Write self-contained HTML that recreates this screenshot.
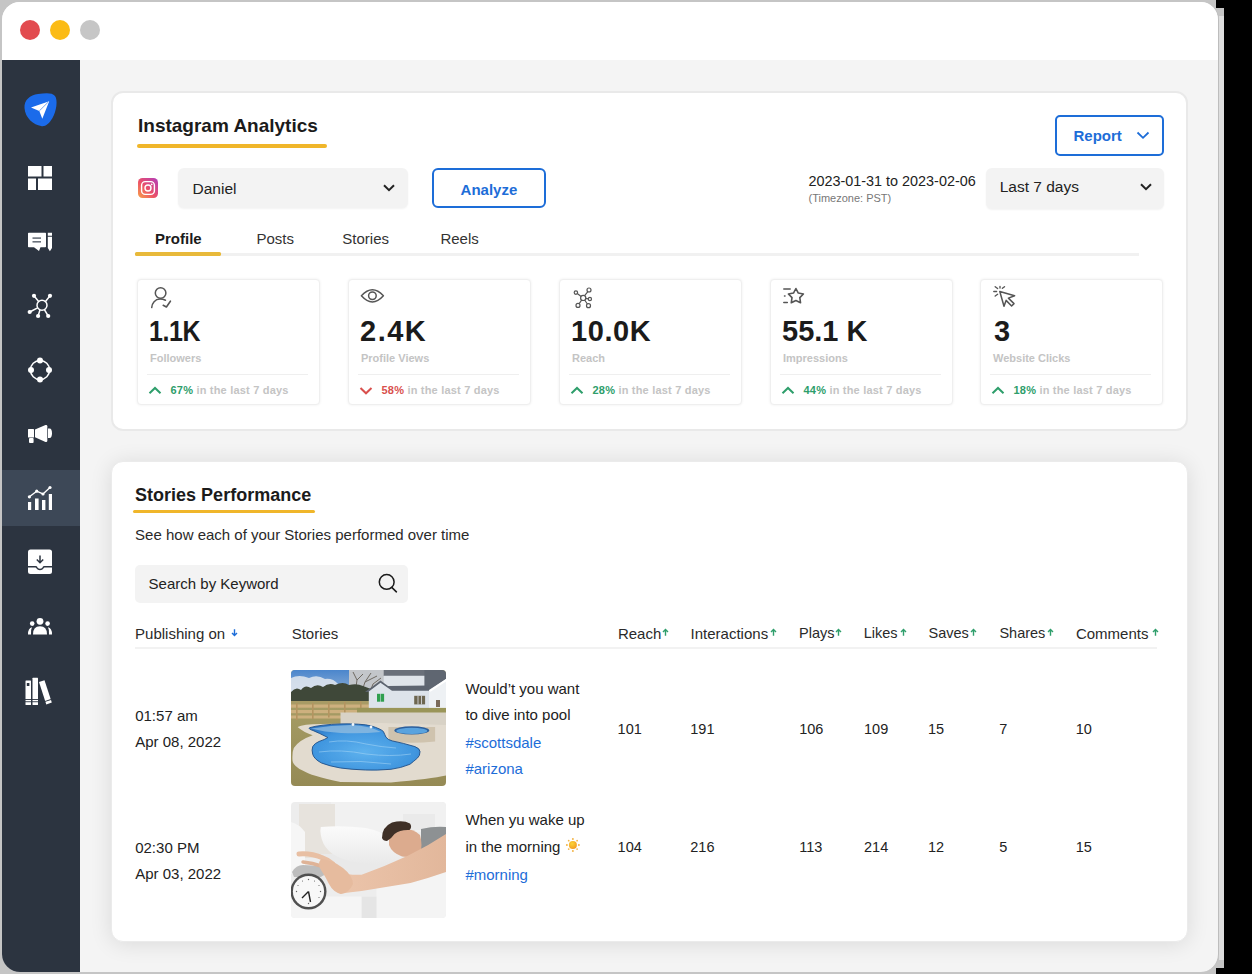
<!DOCTYPE html>
<html><head><meta charset="utf-8">
<style>
*{margin:0;padding:0;box-sizing:border-box}
html,body{width:1252px;height:974px;overflow:hidden;background:#000;font-family:"Liberation Sans",sans-serif}
.a{position:absolute}
.t{position:absolute;white-space:nowrap;line-height:1}
#bg1{left:0;top:0;width:1216px;height:974px;background:#c5c5c5}
#bg2{left:0;top:8px;width:1224px;height:960px;background:#c5c5c5}
#rstrip{left:1219px;top:16px;width:5px;height:944px;background:#dedede}
#win{left:2px;top:2px;width:1217px;height:970px;border-radius:18px;overflow:hidden;background:#f4f4f4;border-right:1px solid #bdbdbd}
#topbar{left:0;top:0;width:1216px;height:58px;background:#fff}
.dot{position:absolute;width:20px;height:20px;border-radius:50%;top:18px}
#side{left:0;top:58px;width:78px;height:920px;background:#2c3440}
#active{left:0;top:468px;width:78px;height:56px;background:#3d4857}
.card{position:absolute;background:#fff;border:2px solid #e9e9e9;border-radius:12px}
.stat{position:absolute;background:#fff;border:1px solid #efefef;border-radius:4px;box-shadow:0 0 3px rgba(0,0,0,0.07);width:183px;height:126px;top:279px}
</style></head>
<body>
<div id="bg1" class="a"></div>
<div id="bg2" class="a"></div>
<div id="rstrip" class="a"></div>
<div id="win" class="a">
  <div id="topbar" class="a"></div>
  <div class="dot" style="left:18px;background:#e24b4f"></div>
  <div class="dot" style="left:48px;background:#fbbb15"></div>
  <div class="dot" style="left:78px;background:#c6c6c6"></div>
  <div id="side" class="a"></div>
  <div id="active" class="a"></div>
</div>

<svg class="a" style="left:0;top:0" width="80" height="974" viewBox="0 0 80 974">
  <path d="M24.5 108 C24 100 30 95 38 94 C46 93 52 92.5 55 96 C58 100 56.5 111 52.5 118 C49 124 45 127 41 126 C34 125 25 118 24.5 108 Z" fill="#1b6bea"/>
  <path d="M31 107.6 L49.2 101.2 L42.3 118.8 L39.3 110.9 Z" fill="#fff"/>
  <path d="M39.3 110.9 L48 102.3" stroke="#1b6bea" stroke-width="0.6"/>
  <g fill="#fff">
    <rect x="28" y="166" width="13.5" height="10.5"/>
    <rect x="43.5" y="166" width="8.5" height="10.5"/>
    <rect x="28" y="178.5" width="8" height="11.5"/>
    <rect x="38" y="178.5" width="14" height="11.5"/>
  </g>
  <path d="M28 233.5 Q28 232.8 28.7 232.8 H45.3 Q46 232.8 46 233.5 V246.5 Q46 247.3 45.3 247.3 H40.5 L39 251 L34 247.3 H28.7 Q28 247.3 28 246.5 Z" fill="#fff"/>
  <rect x="32.5" y="237.3" width="8.5" height="1.6" fill="#6b727c"/>
  <rect x="32.5" y="241" width="8.5" height="1.6" fill="#6b727c"/>
  <path d="M47.8 232.8 H52 V235.8 H47.8 Z M47.8 236.8 H52 V248 L49.9 251.2 L47.8 248 Z" fill="#fff"/>
  <g stroke="#fff" stroke-width="1.5" fill="none">
    <circle cx="42" cy="305.3" r="5"/>
    <path d="M38.6 301.5 L34 295.8 M45.5 301.5 L50 295.8 M37.6 307.8 L29.7 312 M40 309.8 L38.1 316 M44.4 309.6 L48.2 316"/>
    <circle cx="40" cy="370" r="9.6"/>
  </g>
  <g fill="#fff">
    <circle cx="34" cy="295.8" r="2.1"/><circle cx="50" cy="295.8" r="2.1"/><circle cx="29.7" cy="312" r="2.1"/><circle cx="38.1" cy="316" r="2.1"/><circle cx="48.2" cy="316" r="2.1"/>
    <circle cx="40" cy="360.6" r="3"/><circle cx="31" cy="370" r="3"/><circle cx="49" cy="370" r="3"/><circle cx="40" cy="379.4" r="3"/>
    <rect x="28" y="429" width="6" height="8.6" rx="0.6"/>
    <rect x="29" y="438" width="4.6" height="5" rx="1"/>
    <path d="M35 429.5 L45.5 425 Q47.3 424.5 47.3 426.3 V440.7 Q47.3 442.5 45.5 442 L35 437.3 Z"/>
    <path d="M48 428.6 H49.5 Q52 428.6 52 433.3 Q52 438 49.5 438 H48 Z"/>
    <rect x="28" y="502" width="3.2" height="8"/>
    <rect x="35" y="498.5" width="3.6" height="11.5"/>
    <rect x="42" y="500" width="3.4" height="10"/>
    <rect x="48.8" y="494" width="3.2" height="16"/>
    <circle cx="29.4" cy="496.8" r="1.6"/><circle cx="36.7" cy="491.2" r="1.6"/><circle cx="43" cy="494" r="1.6"/><circle cx="50" cy="487.5" r="1.6"/>
  </g>
  <path d="M29.4 496.8 L36.7 491.2 L43 494 L50 487.5" stroke="#fff" stroke-width="1.4" fill="none"/>
  <rect x="28" y="549.5" width="24" height="24.5" rx="2.5" fill="#fff"/>
  <path d="M40 555.5 V562.5 M36.8 559.5 L40 562.7 L43.2 559.5" stroke="#2c3440" stroke-width="1.5" fill="none"/>
  <path d="M28 566.8 H35.5 Q36.5 566.8 37 567.8 Q38 569.5 40 569.5 Q42 569.5 43 567.8 Q43.5 566.8 44.5 566.8 H52" stroke="#2c3440" stroke-width="1.5" fill="none"/>
  <g fill="#fff">
    <circle cx="40" cy="621.3" r="3.4"/>
    <circle cx="32.2" cy="623.6" r="2.3"/>
    <circle cx="47.6" cy="623.6" r="2.3"/>
    <path d="M33 634.4 Q33 626.3 40 626.3 Q47 626.3 47 634.4 Z"/>
    <path d="M28 634.4 Q28 628 32 627.3 Q30.5 630 31 634.4 Z"/>
    <path d="M52 634.4 Q52 628 48 627.3 Q49.5 630 49 634.4 Z"/>
    <rect x="25.5" y="680.5" width="5.5" height="24.5" rx="0.5"/>
    <rect x="32.5" y="677.8" width="5.5" height="27.2" rx="0.5"/>
    <path d="M39 682 L44.5 680.3 L51.8 702.5 L46.3 704.5 Z"/>
  </g>
  <g fill="#2c3440">
    <rect x="26.8" y="683" width="2.6" height="3"/>
    <rect x="25" y="699" width="14" height="0.9"/>
    <rect x="25" y="701.3" width="14" height="0.9"/>
    <path d="M44.3 701.2 L50.8 699 L51.1 699.9 L44.6 702.1 Z"/>
  </g>
</svg>
<!-- CARD1 -->
<div class="card" style="left:111px;top:91px;width:1077px;height:340px"></div>
<div class="t" style="left:138px;top:116.2px;font-size:19px;font-weight:700;color:#1b1b1b;">Instagram Analytics</div>
<div class="a" style="left:137px;top:144px;width:189.5px;height:3.6px;border-radius:2px;background:#f0b62a"></div>
<svg class="a" style="left:138px;top:178px" width="20" height="20" viewBox="0 0 20 20">
<defs><linearGradient id="ig" x1="0" y1="1" x2="1" y2="0"><stop offset="0" stop-color="#f8a14a"/><stop offset="0.45" stop-color="#ec5068"/><stop offset="1" stop-color="#b13dbb"/></linearGradient></defs>
<rect width="20" height="20" rx="4.5" fill="url(#ig)"/>
<rect x="3.6" y="3.6" width="12.8" height="12.8" rx="3.6" fill="none" stroke="#fff" stroke-width="1.4"/>
<circle cx="10" cy="10" r="3" fill="none" stroke="#fff" stroke-width="1.4"/>
<circle cx="13.7" cy="6.3" r="0.9" fill="#fff"/>
</svg>
<div class="a" style="left:178px;top:168px;width:230px;height:40px;border-radius:6px;background:#f3f3f3;box-shadow:0 1px 2px rgba(0,0,0,0.05)"></div>
<div class="t" style="left:192.5px;top:181.1px;font-size:15.5px;font-weight:400;color:#222;">Daniel</div>
<svg class="a" style="left:382px;top:183px" width="14" height="10" viewBox="0 0 14 10"><path d="M2 2.2 L7 7.2 L12 2.2" stroke="#222" stroke-width="2" fill="none"/></svg>
<div class="a" style="left:432px;top:168px;width:114px;height:40px;border-radius:6px;border:2px solid #1d6dd8"></div>
<div class="t" style="left:460.6px;top:181.9px;font-size:15px;font-weight:700;color:#1d6dd8;">Analyze</div>
<div class="a" style="left:1055px;top:115px;width:109px;height:41px;border-radius:5px;border:2px solid #1d6dd8"></div>
<div class="t" style="left:1073.5px;top:128.2px;font-size:15px;font-weight:700;color:#1d6dd8;">Report</div>
<svg class="a" style="left:1135px;top:130px" width="16" height="10" viewBox="0 0 16 10"><path d="M2.5 2.5 L8 7.8 L13.5 2.5" stroke="#1d6dd8" stroke-width="1.8" fill="none"/></svg>
<div class="t" style="left:808.5px;top:174.3px;font-size:14.4px;font-weight:400;color:#222;">2023-01-31 to 2023-02-06</div>
<div class="t" style="left:808.5px;top:193.0px;font-size:11px;font-weight:400;color:#777;">(Timezone: PST)</div>
<div class="a" style="left:986px;top:168px;width:178px;height:41px;border-radius:6px;background:#f3f3f3;box-shadow:0 1px 2px rgba(0,0,0,0.05)"></div>
<div class="t" style="left:999.7px;top:179.0px;font-size:15.5px;font-weight:400;color:#222;">Last 7 days</div>
<svg class="a" style="left:1139px;top:182px" width="14" height="10" viewBox="0 0 14 10"><path d="M2 2.2 L7 7.2 L12 2.2" stroke="#222" stroke-width="2" fill="none"/></svg>
<div class="t" style="left:155px;top:230.8px;font-size:15px;font-weight:700;color:#1b1b1b;">Profile</div>
<div class="t" style="left:256.4px;top:230.8px;font-size:15px;font-weight:400;color:#333;">Posts</div>
<div class="t" style="left:342.3px;top:230.8px;font-size:15px;font-weight:400;color:#333;">Stories</div>
<div class="t" style="left:440.4px;top:231.4px;font-size:15px;font-weight:400;color:#333;">Reels</div>
<div class="a" style="left:221px;top:252.5px;width:918px;height:3px;background:#f1f1f1"></div>
<div class="a" style="left:135px;top:252.2px;width:86px;height:3.4px;border-radius:1.5px;background:#e8b93a"></div>
<div class="stat" style="left:137px"></div>
<svg class="a" style="left:137px;top:279px" width="40" height="32" viewBox="0 0 40 32"><circle cx="23.6" cy="14" r="5.3" fill="none" stroke="#555" stroke-width="1.5"/><path d="M14.7 28.6 C15 24 18 20.2 23 20.1 C25 20.1 27 20.6 28.5 21.3" fill="none" stroke="#555" stroke-width="1.5" stroke-linecap="round"/><path d="M26.2 26.3 L29.4 28 L33.4 22.2" fill="none" stroke="#555" stroke-width="1.6" stroke-linecap="round" stroke-linejoin="round"/></svg>
<div class="t" style="left:149px;top:317.2px;font-size:29px;font-weight:700;color:#1b1b1b;letter-spacing:-0.5px;transform:scaleX(0.86);transform-origin:0 0;">1.1K</div>
<div class="t" style="left:150px;top:353.2px;font-size:11px;font-weight:700;color:#c4c4c4;">Followers</div>
<div class="a" style="left:147px;top:373.5px;width:161px;height:1px;background:#efefef"></div>
<svg class="a" style="left:148px;top:385.5px" width="15" height="10" viewBox="0 0 15 10"><path d="M1.5 7.3 L7 2 L12.5 7.3" stroke="#2e9e6b" stroke-width="2" fill="none"/></svg>
<div class="t" style="left:170.5px;top:384.6px;font-size:11px;font-weight:700;color:#c4c4c4;letter-spacing:0.2px"><span style="color:#2e9e6b">67%</span> in the last 7 days</div>
<div class="stat" style="left:348px"></div>
<svg class="a" style="left:348px;top:279px" width="40" height="32" viewBox="0 0 40 32"><path d="M13.4 16.8 Q24.4 4.6 35.4 16.8 Q24.4 29 13.4 16.8 Z" fill="none" stroke="#555" stroke-width="1.5" stroke-linejoin="round"/><circle cx="24.4" cy="16.8" r="3.8" fill="none" stroke="#555" stroke-width="1.5"/></svg>
<div class="t" style="left:360px;top:317.2px;font-size:29px;font-weight:700;color:#1b1b1b;letter-spacing:1.5px;">2.4K</div>
<div class="t" style="left:361px;top:353.2px;font-size:11px;font-weight:700;color:#c4c4c4;">Profile Views</div>
<div class="a" style="left:358px;top:373.5px;width:161px;height:1px;background:#efefef"></div>
<svg class="a" style="left:359px;top:385.5px" width="15" height="10" viewBox="0 0 15 10"><path d="M1.5 2 L7 7.3 L12.5 2" stroke="#d9504d" stroke-width="2" fill="none"/></svg>
<div class="t" style="left:381.5px;top:384.6px;font-size:11px;font-weight:700;color:#c4c4c4;letter-spacing:0.2px"><span style="color:#d9504d">58%</span> in the last 7 days</div>
<div class="stat" style="left:559px"></div>
<svg class="a" style="left:559px;top:279px" width="40" height="32" viewBox="0 0 40 32"><g fill="none" stroke="#555" stroke-width="1.2"><circle cx="24.2" cy="18.9" r="2.6"/><circle cx="16.9" cy="13.6" r="1.7"/><circle cx="30" cy="11" r="2"/><circle cx="30.9" cy="20" r="1.6"/><circle cx="19" cy="26.4" r="2"/><circle cx="29.5" cy="26.7" r="2"/><path d="M22.1 17.4 L18.3 14.6 M25.6 16.6 L28.9 12.7 M26.8 19.4 L29.3 19.8 M22.7 21 L20.2 24.7 M25.6 21 L28.4 25"/></g></svg>
<div class="t" style="left:571px;top:317.2px;font-size:29px;font-weight:700;color:#1b1b1b;letter-spacing:0.6px;">10.0K</div>
<div class="t" style="left:572px;top:353.2px;font-size:11px;font-weight:700;color:#c4c4c4;">Reach</div>
<div class="a" style="left:569px;top:373.5px;width:161px;height:1px;background:#efefef"></div>
<svg class="a" style="left:570px;top:385.5px" width="15" height="10" viewBox="0 0 15 10"><path d="M1.5 7.3 L7 2 L12.5 7.3" stroke="#2e9e6b" stroke-width="2" fill="none"/></svg>
<div class="t" style="left:592.5px;top:384.6px;font-size:11px;font-weight:700;color:#c4c4c4;letter-spacing:0.2px"><span style="color:#2e9e6b">28%</span> in the last 7 days</div>
<div class="stat" style="left:770px"></div>
<svg class="a" style="left:770px;top:279px" width="40" height="32" viewBox="0 0 40 32"><path d="M25.90 9.50 L28.31 14.08 L33.41 14.96 L29.80 18.67 L30.54 23.79 L25.90 21.50 L21.26 23.79 L22.00 18.67 L18.39 14.96 L23.49 14.08 Z" fill="none" stroke="#555" stroke-width="1.6" stroke-linejoin="round"/><path d="M13.8 10 H20.2 M14.5 17 H15 M13.8 23.6 H17.3" stroke="#555" stroke-width="1.5" stroke-linecap="round"/></svg>
<div class="t" style="left:782px;top:317.2px;font-size:29px;font-weight:700;color:#1b1b1b;">55.1 K</div>
<div class="t" style="left:783px;top:353.2px;font-size:11px;font-weight:700;color:#c4c4c4;">Impressions</div>
<div class="a" style="left:780px;top:373.5px;width:161px;height:1px;background:#efefef"></div>
<svg class="a" style="left:781px;top:385.5px" width="15" height="10" viewBox="0 0 15 10"><path d="M1.5 7.3 L7 2 L12.5 7.3" stroke="#2e9e6b" stroke-width="2" fill="none"/></svg>
<div class="t" style="left:803.5px;top:384.6px;font-size:11px;font-weight:700;color:#c4c4c4;letter-spacing:0.2px"><span style="color:#2e9e6b">44%</span> in the last 7 days</div>
<div class="stat" style="left:980px"></div>
<svg class="a" style="left:980px;top:279px" width="40" height="32" viewBox="0 0 40 32"><path d="M19.8 12.5 L34.6 16.8 L28.4 19.1 L34 24.6 L31.6 27 L26.1 21.4 L24 27.3 Z" fill="none" stroke="#555" stroke-width="1.5" stroke-linejoin="round"/><path d="M20 7.4 V9.1 M22.4 9.3 L24.5 7.7 M15.2 7.7 L17.6 9.5 M13.8 12.5 H16.6 M15.2 17 L17.6 15.3" stroke="#555" stroke-width="1.4" stroke-linecap="round"/></svg>
<div class="t" style="left:992px;top:317.2px;font-size:29px;font-weight:700;color:#1b1b1b;margin-left:2px;">3</div>
<div class="t" style="left:993px;top:353.2px;font-size:11px;font-weight:700;color:#c4c4c4;">Website Clicks</div>
<div class="a" style="left:990px;top:373.5px;width:161px;height:1px;background:#efefef"></div>
<svg class="a" style="left:991px;top:385.5px" width="15" height="10" viewBox="0 0 15 10"><path d="M1.5 7.3 L7 2 L12.5 7.3" stroke="#2e9e6b" stroke-width="2" fill="none"/></svg>
<div class="t" style="left:1013.5px;top:384.6px;font-size:11px;font-weight:700;color:#c4c4c4;letter-spacing:0.2px"><span style="color:#2e9e6b">18%</span> in the last 7 days</div>
<!-- CARD2 -->
<div class="card" style="left:111px;top:461px;width:1077px;height:481px;border:1px solid #ebebeb;border-radius:12px;box-shadow:0 2px 22px rgba(0,0,0,0.11)"></div>
<div class="t" style="left:135.1px;top:485.8px;font-size:18px;font-weight:700;color:#1b1b1b;">Stories Performance</div>
<div class="a" style="left:133px;top:509.5px;width:182px;height:3.5px;border-radius:2px;background:#f0b62a"></div>
<div class="t" style="left:135.1px;top:526.8px;font-size:15px;font-weight:400;color:#2a2a2a;">See how each of your Stories performed over time</div>
<div class="a" style="left:135px;top:565px;width:273px;height:38px;border-radius:5px;background:#f3f3f3"></div>
<div class="t" style="left:148.6px;top:576.1px;font-size:15px;font-weight:400;color:#222;">Search by Keyword</div>
<svg class="a" style="left:372px;top:568px" width="30" height="30" viewBox="0 0 30 30"><circle cx="14.7" cy="13.9" r="7.4" fill="none" stroke="#1b1b1b" stroke-width="1.5"/><path d="M20 19.6 L24.4 23.8" stroke="#1b1b1b" stroke-width="1.6" stroke-linecap="round"/></svg>
<div class="t" style="left:135.1px;top:625.8px;font-size:15px;font-weight:400;color:#2a2a2a;">Publishing on</div>
<div class="t" style="left:291.7px;top:625.8px;font-size:15px;font-weight:400;color:#2a2a2a;">Stories</div>
<div class="t" style="left:617.9px;top:625.8px;font-size:15px;font-weight:400;color:#2a2a2a;">Reach</div>
<svg class="a" style="left:661.8px;top:628px" width="7" height="9" viewBox="0 0 7 9"><path d="M3.5 7.8 V1.6 M1 3.9 L3.5 1.4 L6 3.9" stroke="#2e9e6b" stroke-width="1.4" fill="none"/></svg>
<div class="t" style="left:690.6px;top:625.8px;font-size:15px;font-weight:400;color:#2a2a2a;">Interactions</div>
<svg class="a" style="left:770.4px;top:628px" width="7" height="9" viewBox="0 0 7 9"><path d="M3.5 7.8 V1.6 M1 3.9 L3.5 1.4 L6 3.9" stroke="#2e9e6b" stroke-width="1.4" fill="none"/></svg>
<div class="t" style="left:799px;top:625.8px;font-size:14.5px;font-weight:400;color:#2a2a2a;">Plays</div>
<svg class="a" style="left:835.3px;top:628px" width="7" height="9" viewBox="0 0 7 9"><path d="M3.5 7.8 V1.6 M1 3.9 L3.5 1.4 L6 3.9" stroke="#2e9e6b" stroke-width="1.4" fill="none"/></svg>
<div class="t" style="left:863.7px;top:625.8px;font-size:14.5px;font-weight:400;color:#2a2a2a;">Likes</div>
<svg class="a" style="left:900.2px;top:628px" width="7" height="9" viewBox="0 0 7 9"><path d="M3.5 7.8 V1.6 M1 3.9 L3.5 1.4 L6 3.9" stroke="#2e9e6b" stroke-width="1.4" fill="none"/></svg>
<div class="t" style="left:928.5px;top:625.8px;font-size:14.5px;font-weight:400;color:#2a2a2a;">Saves</div>
<svg class="a" style="left:970.4px;top:628px" width="7" height="9" viewBox="0 0 7 9"><path d="M3.5 7.8 V1.6 M1 3.9 L3.5 1.4 L6 3.9" stroke="#2e9e6b" stroke-width="1.4" fill="none"/></svg>
<div class="t" style="left:999.4px;top:625.8px;font-size:14.5px;font-weight:400;color:#2a2a2a;">Shares</div>
<svg class="a" style="left:1046.9px;top:628px" width="7" height="9" viewBox="0 0 7 9"><path d="M3.5 7.8 V1.6 M1 3.9 L3.5 1.4 L6 3.9" stroke="#2e9e6b" stroke-width="1.4" fill="none"/></svg>
<div class="t" style="left:1075.9px;top:625.8px;font-size:15px;font-weight:400;color:#2a2a2a;">Comments</div>
<svg class="a" style="left:1152.0px;top:628px" width="7" height="9" viewBox="0 0 7 9"><path d="M3.5 7.8 V1.6 M1 3.9 L3.5 1.4 L6 3.9" stroke="#2e9e6b" stroke-width="1.4" fill="none"/></svg>
<svg class="a" style="left:230.6px;top:628px" width="7" height="9" viewBox="0 0 7 9"><path d="M3.5 1.2 V7.4 M1 5.1 L3.5 7.6 L6 5.1" stroke="#1d6dd8" stroke-width="1.4" fill="none"/></svg>
<div class="a" style="left:135px;top:646.5px;width:1022px;height:2px;background:#f2f2f2"></div>
<div class="t" style="left:135.2px;top:708.1px;font-size:15px;font-weight:400;color:#222;">01:57 am</div>
<div class="t" style="left:135.2px;top:734.1px;font-size:15px;font-weight:400;color:#222;">Apr 08, 2022</div>
<div class="t" style="left:465.4px;top:681.4px;font-size:15px;font-weight:400;color:#222;">Would&#8217;t you want</div>
<div class="t" style="left:465.4px;top:707.4px;font-size:15px;font-weight:400;color:#222;">to dive into pool</div>
<div class="t" style="left:465.4px;top:735.0px;font-size:15px;font-weight:400;color:#1d6dd8;">#scottsdale</div>
<div class="t" style="left:465.4px;top:761.2px;font-size:15px;font-weight:400;color:#1d6dd8;">#arizona</div>
<div class="t" style="left:135.2px;top:840.0px;font-size:15px;font-weight:400;color:#222;">02:30 PM</div>
<div class="t" style="left:135.2px;top:865.9px;font-size:15px;font-weight:400;color:#222;">Apr 03, 2022</div>
<div class="t" style="left:465.4px;top:812.0px;font-size:15px;font-weight:400;color:#222;">When yu wake up</div>
<div class="t" style="left:465.4px;top:838.8px;font-size:15px;font-weight:400;color:#222;">in the morning</div>
<div class="t" style="left:465.4px;top:866.6px;font-size:15px;font-weight:400;color:#1d6dd8;">#morning</div>
<div class="t" style="left:617.6px;top:721.5px;font-size:14.5px;font-weight:400;color:#222;">101</div>
<div class="t" style="left:617.6px;top:839.7px;font-size:14.5px;font-weight:400;color:#222;">104</div>
<div class="t" style="left:690.3px;top:721.5px;font-size:14.5px;font-weight:400;color:#222;">191</div>
<div class="t" style="left:690.3px;top:839.7px;font-size:14.5px;font-weight:400;color:#222;">216</div>
<div class="t" style="left:799.2px;top:721.5px;font-size:14.5px;font-weight:400;color:#222;">106</div>
<div class="t" style="left:799.2px;top:839.7px;font-size:14.5px;font-weight:400;color:#222;">113</div>
<div class="t" style="left:864px;top:721.5px;font-size:14.5px;font-weight:400;color:#222;">109</div>
<div class="t" style="left:864px;top:839.7px;font-size:14.5px;font-weight:400;color:#222;">214</div>
<div class="t" style="left:928px;top:721.5px;font-size:14.5px;font-weight:400;color:#222;">15</div>
<div class="t" style="left:928px;top:839.7px;font-size:14.5px;font-weight:400;color:#222;">12</div>
<div class="t" style="left:999.3px;top:721.5px;font-size:14.5px;font-weight:400;color:#222;">7</div>
<div class="t" style="left:999.3px;top:839.7px;font-size:14.5px;font-weight:400;color:#222;">5</div>
<div class="t" style="left:1075.8px;top:721.5px;font-size:14.5px;font-weight:400;color:#222;">10</div>
<div class="t" style="left:1075.8px;top:839.7px;font-size:14.5px;font-weight:400;color:#222;">15</div>
<svg class="a" style="left:291px;top:670px" width="155" height="116" viewBox="0 0 155 116">
<defs>
<clipPath id="c1"><rect width="155" height="116" rx="4"/></clipPath>
<linearGradient id="sky" x1="0" y1="0" x2="0" y2="1"><stop offset="0" stop-color="#4b86cc"/><stop offset="1" stop-color="#a9c1dc"/></linearGradient>
<radialGradient id="pw" cx="0.5" cy="0.6" r="0.65"><stop offset="0" stop-color="#5fb2ee"/><stop offset="0.7" stop-color="#4096df"/><stop offset="1" stop-color="#2f78c6"/></radialGradient>
<linearGradient id="gr" x1="0" y1="0" x2="0" y2="1"><stop offset="0" stop-color="#aca46c"/><stop offset="1" stop-color="#958a55"/></linearGradient>
</defs>
<g clip-path="url(#c1)">
<rect width="155" height="116" fill="url(#gr)"/>
<rect width="100" height="34" fill="url(#sky)"/>
<path d="M0 8 Q8 4 18 8 Q26 4 34 9 Q42 8 47 14 L47 22 L0 22 Z" fill="#e4e9ef" opacity="0.85"/>
<path d="M58 0 L93 0 L93 24 L58 24 Z" fill="#c3c6ca"/><path d="M64 24 L66 10 L62 2 M66 10 L72 4 M70 24 L74 12 L80 3 M74 12 L86 6 M78 24 L82 14 L90 8" stroke="#6f6a62" stroke-width="1" fill="none"/>
<path d="M0 22 Q5 16 10 20 Q14 14 20 18 Q26 13 32 17 Q38 12 44 15 Q52 11 58 15 Q66 13 72 16 L80 19 L80 33 L0 33 Z" fill="#3f4839"/>
<rect x="0" y="31" width="80" height="5" fill="#a89b65"/>
<g fill="#cdb07e"><rect x="0" y="34.5" width="78" height="3.2"/><rect x="0" y="40" width="78" height="3.2"/><rect x="0" y="45.5" width="78" height="3"/></g>
<g fill="#b49460"><rect x="5" y="33" width="1.6" height="17"/><rect x="21" y="33" width="1.6" height="16"/><rect x="37" y="32.5" width="1.6" height="15"/><rect x="53" y="32" width="1.6" height="13"/><rect x="69" y="31.5" width="1.6" height="12"/></g>
<path d="M92.7 0 H137.3 V6 H92.7 Z" fill="#6a707a"/>
<path d="M92.7 5.8 H137.3 V16 H92.7 Z" fill="#dfe4ea"/>
<path d="M133.4 0 H155 V20 H133.4 Z" fill="#5f6671"/>
<path d="M74 22 L89.5 10.5 L97 16 L138 15.5 L138 21 L101 21 Z" fill="#5d6470"/>
<path d="M77.8 21.6 L89.5 12.8 L101 20.7 H138 V38 H77.8 Z" fill="#dde3ea"/>
<path d="M138 20 L155 9 L155 39.5 L138 39.5 Z" fill="#eef1f4"/>
<path d="M138 20.5 L155 9 L155 11.5 L139.5 21.8 Z" fill="#fff"/>
<rect x="86" y="23.8" width="3.3" height="7.9" fill="#2f9f4f"/><rect x="89.8" y="23.8" width="3.3" height="7.9" fill="#2f9f4f"/>
<rect x="123.2" y="25.8" width="10.9" height="8.6" fill="#6d6650"/>
<rect x="126.6" y="25.8" width="0.8" height="8.6" fill="#e0e4ea"/><rect x="130.2" y="25.8" width="0.8" height="8.6" fill="#e0e4ea"/>
<rect x="145" y="30" width="4" height="7" fill="#7a6a5a"/>
<rect x="66" y="37.9" width="89" height="6.5" fill="#9a9558"/>
<path d="M49.5 42.5 H155 V59 H49.5 Z" fill="#d8d2c6"/>
<path d="M6.6 57 Q12 54 30 54 L90 53 L155 55 L155 105.6 Q140 109 100 112.6 L49.5 112 Q20 106 11.6 100.6 Q2 96 1.5 90.5 Q1 82 2.8 77.9 Q8 70 21.7 65.2 Q12 62 6.6 57 Z" fill="#e2dbcf"/>
<path d="M97.4 57 H144.1 V71.5 Q120 74 97.4 71.5 Z" fill="#cfc3ae"/>
<ellipse cx="120.8" cy="60.4" rx="17.5" ry="4.2" fill="#2c5f9c"/>
<ellipse cx="120.8" cy="60.9" rx="15.5" ry="3.1" fill="#5aa3de"/>
<path d="M18.6 57.7 Q30 54.5 50 53.9 Q70 53.5 79.8 55.8 Q90 59 92.4 61.5 Q94 65 94.9 67.1 Q97 70 101.2 70.9 Q112 73 123.9 76.6 Q129 78.5 129 81.6 Q129 86 126.5 88 Q122 92 118.9 94.3 Q110 98 100 99.3 Q85 100.5 74.7 100 Q60 99.5 49.5 98 Q38 96 30.5 93 Q23 89 21.7 84.2 Q20.5 80 21.7 76.6 Q24 73 28 71.5 Q34 69.5 36.9 67.5 Q28 63 22 60.5 Q17 59 18.6 57.7 Z" fill="url(#pw)" stroke="#1f4f88" stroke-width="0.9"/>
<path d="M20 58.5 Q40 55 60 55 Q80 56 90 62 Q70 64 50 63 Q33 62 20 58.5 Z" fill="#8fbbe0" opacity="0.8"/>
<g stroke="#a7d6f6" stroke-width="1" fill="none" opacity="0.55"><path d="M38 72 Q55 69 75 74 Q90 77 105 78"/><path d="M28 82 Q50 79 75 84 Q100 87 120 84"/><path d="M40 92 Q70 90 100 94"/></g>
<circle cx="62" cy="54.5" r="1.4" fill="#f4f8fb"/><circle cx="80" cy="57" r="1.4" fill="#f4f8fb"/>
</g>
</svg>

<svg class="a" style="left:291px;top:802px" width="155" height="116" viewBox="0 0 155 116">
<defs>
<clipPath id="c2"><rect width="155" height="116" rx="4"/></clipPath>
<linearGradient id="arm" x1="0" y1="0" x2="1" y2="0"><stop offset="0" stop-color="#ecc5ab"/><stop offset="1" stop-color="#e2b79b"/></linearGradient>
<linearGradient id="pil" x1="0" y1="0" x2="0" y2="1"><stop offset="0" stop-color="#fbfbfb"/><stop offset="1" stop-color="#e9e9e9"/></linearGradient>
</defs>
<g clip-path="url(#c2)">
<rect width="155" height="116" fill="#ededed"/>
<rect x="40" y="0" width="115" height="30" fill="#f1f1f1"/>
<path d="M8 2 H44 V56 H8 Z" fill="#e7e3dd"/>
<path d="M0 20 Q8 22 14 30 V72 H0 Z" fill="#f6f6f6"/>
<rect x="112" y="12" width="32" height="16" fill="#e8e8e8" opacity="0.8"/>
<path d="M30 52 H125 V82 H30 Z" fill="#e9e9e9"/>
<path d="M85.5 72 Q120 68 155 62 V116 H85.5 Z" fill="#f4f4f4"/>
<path d="M29.8 25 Q50 23 75 26 Q95 30 104 40 Q111 48 111.3 55 Q104 62 92 62.5 Q75 63 60 59.5 Q44 55 38 49 Q31 42 29.8 33 Q29 28 29.8 25 Z" fill="url(#pil)"/>
<path d="M130 27 Q143 24 155 25 V50 H130 Z" fill="#8d9193"/>
<path d="M98 36 Q99 28 108 26.5 Q122 25.5 129 33 Q132 44 129 52 Q121 56 111 54.5 Q101 51 98 43 Z" fill="#dcab8e"/>
<path d="M91 36 Q91 25 101 20.5 Q112 17.5 119 21.5 Q121.5 25 118.5 28 Q109 27.5 103.5 32 Q100 37 96 39 Q92 39 91 36 Z" fill="#3f3027"/>
<path d="M155 32 Q137 44 116.8 53.8 Q95 64 70.6 72.8 Q55 73 43.4 70 L48.8 91.8 Q60 90 70.6 89 Q95 85 119.5 81 Q138 76 155 70 Z" fill="url(#arm)"/>
<rect x="0" y="94.5" width="85.5" height="22" fill="#f5f5f5"/>
<path d="M70.6 94.5 H85.5 V116 H70.6 Z" fill="#e5e5e5"/>
<path d="M1 70 Q5 63 12 63 L30 64 Q36 66 35 72 L28 76 L3 75 Z" fill="#bdbdbd"/>
<circle cx="17.5" cy="89.5" r="18" fill="#505050"/>
<circle cx="17.5" cy="89.5" r="15.6" fill="#f8f8f8"/>
<path d="M17.5 89.5 L11 96 M17.5 89.5 L19.5 100" stroke="#222" stroke-width="1.4"/>
<g fill="#666"><circle cx="17.5" cy="77.5" r="0.7"/><circle cx="29.5" cy="89.5" r="0.7"/><circle cx="17.5" cy="101.5" r="0.7"/><circle cx="5.5" cy="89.5" r="0.7"/><circle cx="23.5" cy="79" r="0.6"/><circle cx="28" cy="83.5" r="0.6"/><circle cx="28" cy="95.5" r="0.6"/><circle cx="11.5" cy="79" r="0.6"/><circle cx="7" cy="83.5" r="0.6"/></g>
<path d="M8 52 Q20 51 32 56 Q38 58 42 62" stroke="#e8bfa3" stroke-width="5" stroke-linecap="round" fill="none"/>
<path d="M12 60 Q22 61 30 64" stroke="#dfb397" stroke-width="3.5" stroke-linecap="round" fill="none"/>
<path d="M30 57 Q42 58 52 66 Q62 74 62 82 Q58 91 50 92 Q42 90 38 82 Q34 74 30 68 Q26 62 30 57 Z" fill="#e6bb9e"/>
</g>
</svg>
<svg class="a" style="left:565px;top:837px" width="16" height="16" viewBox="0 0 16 16">
<defs><radialGradient id="sg" cx="0.4" cy="0.35" r="0.7"><stop offset="0" stop-color="#fbd536"/><stop offset="1" stop-color="#f39a1f"/></radialGradient></defs>
<g fill="#f3b54a"><circle cx="7.9" cy="1.9" r="1"/><circle cx="7.9" cy="13.9" r="1"/><circle cx="1.9" cy="7.9" r="1"/><circle cx="13.9" cy="7.9" r="1"/><circle cx="3.7" cy="3.7" r="0.9"/><circle cx="12.1" cy="3.7" r="0.9"/><circle cx="3.7" cy="12.1" r="0.9"/><circle cx="12.1" cy="12.1" r="0.9"/></g>
<circle cx="7.9" cy="7.9" r="4" fill="url(#sg)"/>
</svg>
</body></html>
